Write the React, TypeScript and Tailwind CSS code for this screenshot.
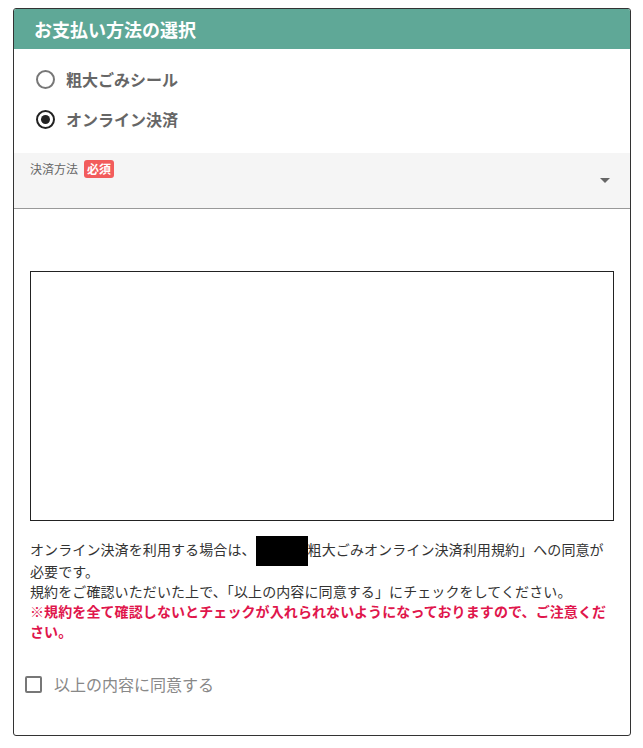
export default function App() {
  return (
    <div className="bg-white min-h-[748px] pt-2 pl-[13px]" style={{ fontFamily: '"Noto Sans CJK JP", "Noto Sans", sans-serif' }}>
      <section className="w-[618px] h-[728px] border border-[#333] rounded-[3px] overflow-hidden flex flex-col">
        <h2 className="h-[40px] bg-[#5fa897] text-white text-[18px] font-bold pl-5 flex items-center">お支払い方法の選択</h2>

        <div className="flex flex-col pt-[10px] pl-[22px]">
          <label className="h-10 flex items-center gap-[11px]">
            <span className="w-[19px] h-[19px] rounded-full border-2 border-[#777]" />
            <span className="text-[16px] font-bold text-[#666]">粗大ごみシール</span>
          </label>
          <label className="h-10 flex items-center gap-[11px]">
            <span className="w-[19px] h-[19px] rounded-full border-2 border-[#222] flex items-center justify-center">
              <span className="w-[9px] h-[9px] rounded-full bg-[#222]" />
            </span>
            <span className="text-[16px] font-bold text-[#666]">オンライン決済</span>
          </label>
        </div>

        <div className="mt-[14px] h-[56px] bg-[#f5f5f5] border-b border-[#999] relative pl-4 pt-[7px]">
          <div className="flex items-center gap-[6px]">
            <span className="text-[12px] text-[#666]">決済方法</span>
            <span className="bg-[#f25c5c] text-white text-[12px] font-bold leading-none px-[3px] py-[3px] rounded-[3px]">必須</span>
          </div>
          <svg className="absolute right-[20px] top-[25px]" width="10" height="5" viewBox="0 0 10 5">
            <path d="M0 0h10L5 5z" fill="#666" />
          </svg>
        </div>

        <div className="px-4 pt-[62px]">
          <div className="h-[250px] border border-[#222]" />
          <p className="mt-[18px] pr-[4px] text-[14px] leading-[20px] text-[#333] tracking-[0.1px]">
            オンライン決済を利用する場合は、<span className="inline-block w-[52px] h-[30px] -my-[5px] bg-black align-middle" />粗大ごみオンライン決済利用規約」への同意が必要です。
            <br />
            規約をご確認いただいた上で、「以上の内容に同意する」にチェックをしてください。
            <br />
            <span className="text-[#e0164c] font-bold">※規約を全て確認しないとチェックが入れられないようになっておりますので、ご注意ください。</span>
          </p>
        </div>

        <label className="mt-[31px] pl-[11px] flex items-center gap-3">
          <span className="w-[17px] h-[17px] border-2 border-[#777] rounded-[2px]" />
          <span className="text-[16px] text-[#888]">以上の内容に同意する</span>
        </label>
      </section>
    </div>
  )
}
